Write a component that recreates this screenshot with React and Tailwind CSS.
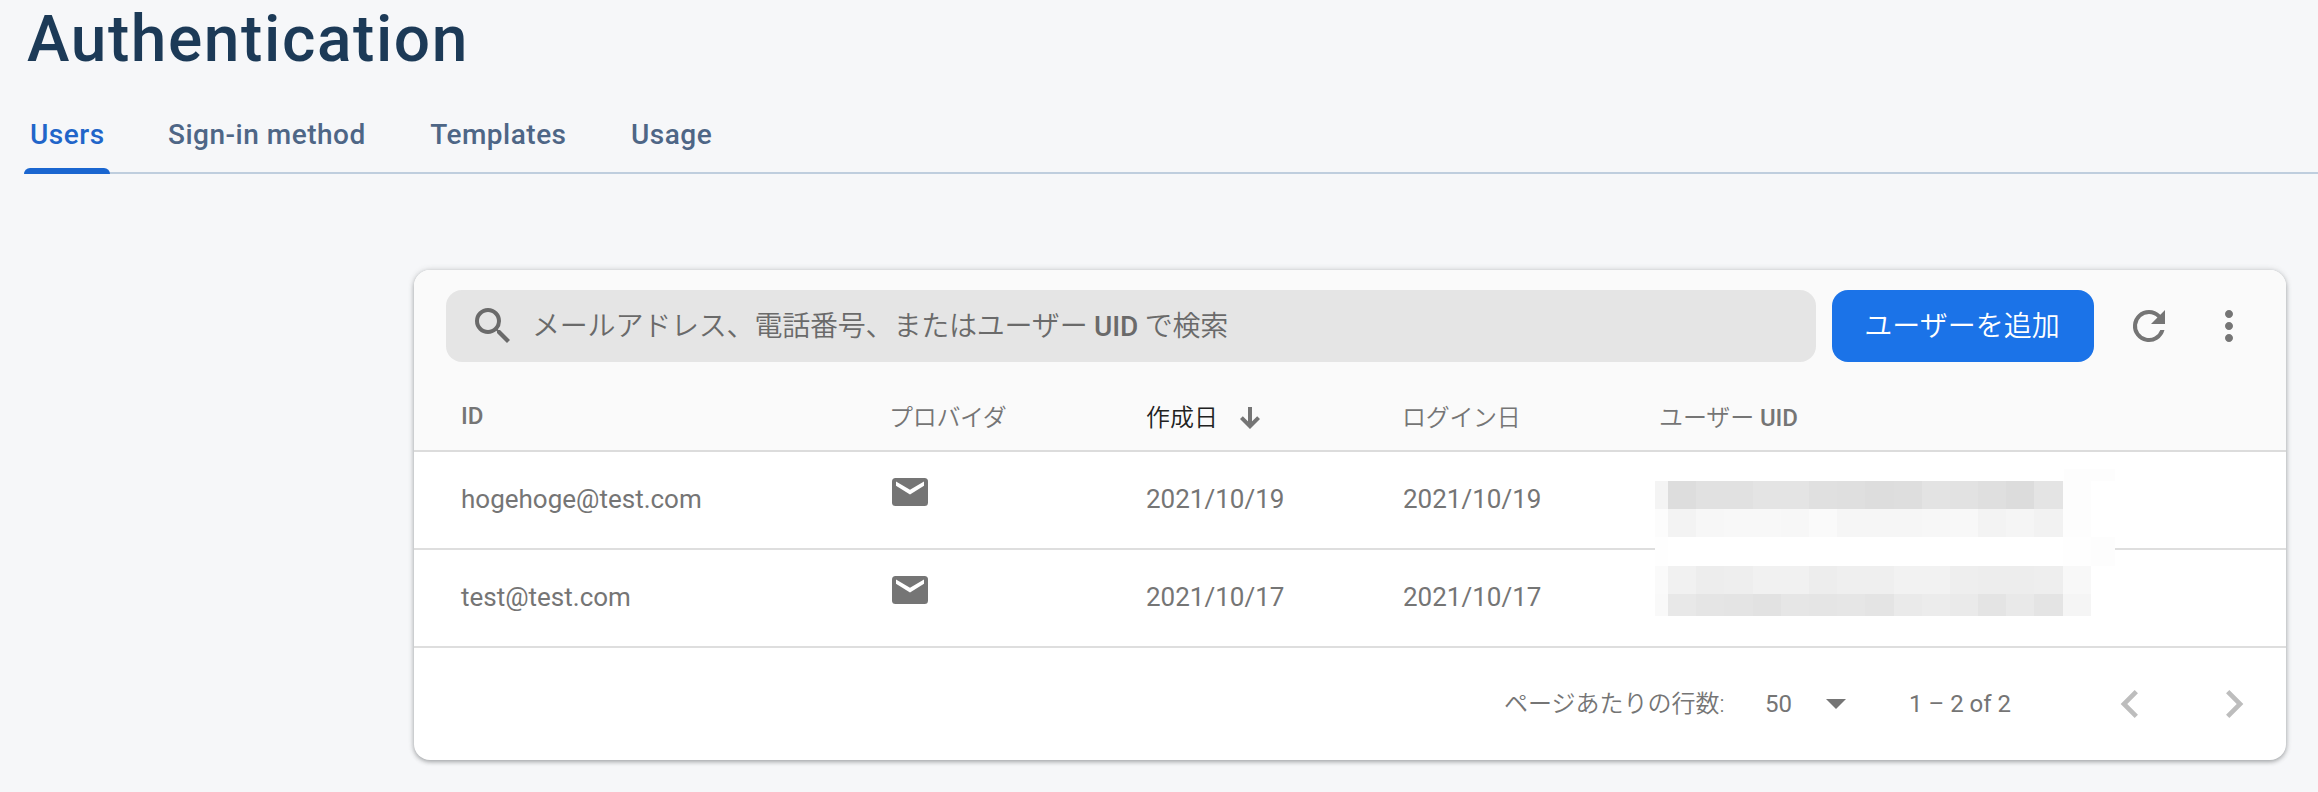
const tabs = [
    { name: "Users", current: true },
    { name: "Sign-in method", current: false },
    { name: "Templates", current: false },
    { name: "Usage", current: false },
];

const users = [
    { email: "hogehoge@test.com", created: "2021/10/19", login: "2021/10/19" },
    { email: "test@test.com", created: "2021/10/17", login: "2021/10/17" },
];

// masked user UIDs, one shade per block
const mask = [
    ["f4", "dd", "e1", "e1", "e4", "e4", "e0", "df", "dd", "de", "e3", "e2", "df", "dc", "e4", "fd", "ff"],
    ["fc", "f3", "f7", "f8", "f8", "f7", "fa", "f6", "f6", "f6", "f7", "f8", "f3", "f5", "f2", "fd", "ff"],
    ["fe", "ff", "ff", "ff", "ff", "ff", "ff", "ff", "ff", "ff", "ff", "ff", "ff", "ff", "ff", "fe", "fd"],
    ["fa", "f1", "ed", "ee", "f1", "f1", "ed", "ef", "ef", "f2", "f2", "ee", "ed", "ed", "ee", "f8", "ff"],
    ["f9", "e8", "e5", "e4", "e2", "e6", "e5", "e6", "e4", "ea", "ec", "ea", "e4", "e9", "e4", "f5", "ff"],
];

function Icon({ d, className }) {
    return (
        <svg className={className} viewBox="0 0 24 24" fill="currentColor" aria-hidden="true">
            <path d={d} />
        </svg>
    );
}

function MailIcon() {
    return (
        <svg className="-mt-3.5 ml-0.5 h-7 w-9 text-[#757575]" viewBox="0 0 36 28" aria-hidden="true">
            <rect width="36" height="28" rx="3.5" fill="currentColor" />
            <path d="M4 3.6l14 8.2 14-8.2v4.2L18 16.4 4 7.8z" fill="#fff" />
        </svg>
    );
}

function MaskedUids() {
    return (
        <div className="absolute top-[199px] left-[1241px] w-[460px]">
            <div className="ml-[409px] h-3 bg-[#fdfdfd]"></div>
            <div className="grid grid-cols-[13px_repeat(14,28.2px)_28px_1fr] grid-rows-[28px_28px_29px_28px_22px]">
                {mask.flat().map((shade, i) => (
                    <div key={i} style={{ backgroundColor: `#${shade}${shade}${shade}` }}></div>
                ))}
            </div>
        </div>
    );
}

export default function App() {
    return (
        <div className="h-[792px] w-[2318px] overflow-hidden bg-[#f6f7f9] font-['Roboto','Noto_Sans_CJK_JP',sans-serif] text-[#757575]">
            <h1 className="h-[106px] pt-0.5 pl-[27px] text-[64px]/[76px] font-medium tracking-[1.6px] text-[#1c3a57]">Authentication</h1>

            <nav className="ml-6 flex h-[68px] border-b-2 border-[#bfcede] text-[28px]/[58px] font-medium tracking-[0.5px] text-[#4e6686]" aria-label="Tabs">
                {tabs.map((tab) => (
                    <a
                        key={tab.name}
                        href="#"
                        className={
                            tab.current
                                ? "relative mr-[52px] h-[68px] w-[86px] pl-1.5 text-[#2165c9]"
                                : "mr-[58.5px] pl-1.5 whitespace-nowrap"
                        }
                    >
                        {tab.name}
                        {tab.current && <span className="absolute bottom-0 left-0 h-1.5 w-full rounded-t-md bg-[#1a66d0]"></span>}
                    </a>
                ))}
            </nav>

            <main className="relative mt-24 ml-[414px] h-[490px] w-[1872px] rounded-2xl bg-white shadow-[0_2px_4px_rgba(60,64,67,0.35),0_0_6px_rgba(60,64,67,0.2)]">
                <div className="h-[182px] rounded-t-2xl border-b-2 border-[#dcdcdc] bg-[#fafafa]">
                    <div className="flex items-center pt-5 pl-8">
                        <div className="flex h-[72px] w-[1370px] items-center rounded-2xl bg-[#e5e5e5] pl-[23px] text-[28px] text-[#6a6a6a]">
                            <Icon
                                className="size-12"
                                d="M15.5 14h-.79l-.28-.27A6.471 6.471 0 0 0 16 9.5 6.5 6.5 0 1 0 9.5 16c1.61 0 3.09-.59 4.23-1.57l.27.28v.79l5 4.99L20.49 19l-4.99-5zm-6 0C7.01 14 5 11.99 5 9.5S7.01 5 9.5 5 14 7.01 14 9.5 11.99 14 9.5 14z"
                            />
                            <p className="ml-[15px] pt-0.5 font-[350] tracking-[-0.2px] whitespace-nowrap">
                                メールアドレス、電話番号、またはユーザー <span className="font-medium">UID</span> で検索
                            </p>
                        </div>
                        <button type="button" className="ml-4 h-[72px] w-[262px] rounded-2xl bg-[#1b73e8] pt-px pr-0.5 text-[28px] font-[350] text-white">
                            ユーザーを追加
                        </button>
                        <Icon
                            className="ml-[31px] size-12"
                            d="M17.65 6.35A7.958 7.958 0 0 0 12 4a8 8 0 1 0 7.73 10h-2.08A6 6 0 1 1 12 6c1.66 0 3.14.69 4.22 1.78L13 11h7V4z"
                        />
                        <Icon
                            className="ml-8 size-12"
                            d="M12 8c1.1 0 2-.9 2-2s-.9-2-2-2-2 .9-2 2 .9 2 2 2zm0 2c-1.1 0-2 .9-2 2s.9 2 2 2 2-.9 2-2-.9-2-2-2zm0 6c-1.1 0-2 .9-2 2s.9 2 2 2 2-.9 2-2-.9-2-2-2z"
                        />
                    </div>
                    <div className="grid h-[88px] grid-cols-[428px_257px_256px_257px_1fr] items-center pt-6 pl-[47px] text-2xl font-[350] tracking-[-0.3px] whitespace-nowrap">
                        <span className="-mt-1 font-medium tracking-normal">ID</span>
                        <span>プロバイダ</span>
                        <span className="flex items-center tracking-normal text-[#212121]">
                            作成日
                            <svg className="ml-[22px] h-[22px] w-5 text-[#757575]" viewBox="0 0 20 22" fill="none" stroke="currentColor" strokeWidth="4">
                                <path d="M10 0v19M1.4 10.6l8.6 8.6 8.6-8.6" />
                            </svg>
                        </span>
                        <span>ログイン日</span>
                        <span className="tracking-[-0.1px]">
                            ユーザー <span className="font-medium">UID</span>
                        </span>
                    </div>
                </div>

                {users.map((user) => (
                    <div
                        key={user.email}
                        className="grid h-[98px] grid-cols-[429px_256px_257px_1fr] items-center border-b-2 border-[#dedede] pb-0.5 pl-[47px] text-[26px]"
                    >
                        <span>{user.email}</span>
                        <MailIcon />
                        <span>{user.created}</span>
                        <span>{user.login}</span>
                    </div>
                ))}
                <MaskedUids />

                <div className="flex h-[112px] items-center pl-[1090px] text-2xl whitespace-nowrap">
                    <span className="w-[261px] font-[350]">ページあたりの行数:</span>
                    <span className="w-[61px]">50</span>
                    <svg className="h-2.5 w-5" viewBox="0 0 20 10" fill="currentColor">
                        <path d="M0 0h20L10 10z" />
                    </svg>
                    <span className="ml-[63px] w-[193px]">1 – 2 of 2</span>
                    <Icon className="size-14 text-[#bdbdbd]" d="M15.41 7.41L14 6l-6 6 6 6 1.41-1.41L10.83 12z" />
                    <Icon className="ml-12 size-14 text-[#bdbdbd]" d="M8.59 16.59L10 18l6-6-6-6-1.41 1.41L13.17 12z" />
                </div>
            </main>
        </div>
    );
}
